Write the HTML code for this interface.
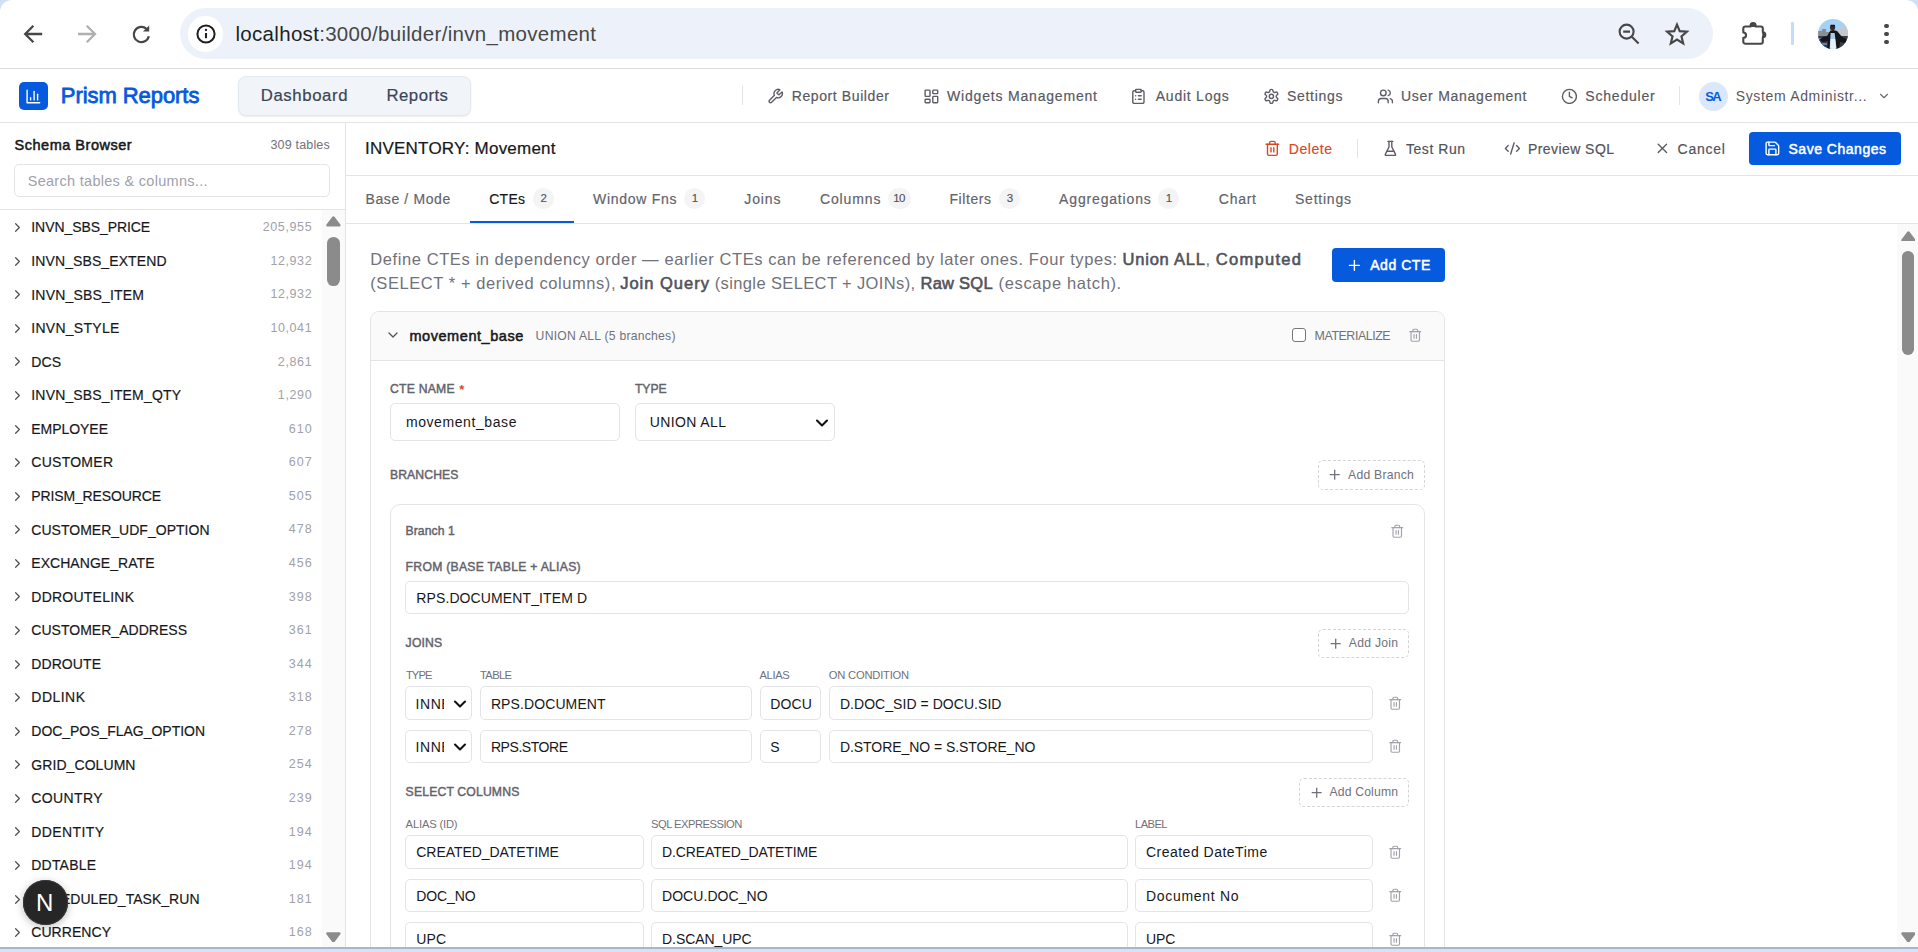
<!DOCTYPE html>
<html lang="en"><head><meta charset="utf-8"><title>Prism Reports - Report Builder</title>
<style>
html,body{margin:0;padding:0}
body{width:1918px;height:952px;overflow:hidden;position:relative;background:#fff;font-family:"Liberation Sans", sans-serif;}
body div,body span,body svg{position:absolute;box-sizing:border-box}
header,nav,aside,main,section,footer{position:absolute;left:0;top:0;width:0;height:0}
body span{white-space:nowrap;display:block}
body span b{position:static}
</style></head><body>
<header>
<div style="left:0px;top:0px;width:12px;height:12px;background:#cfe0f7"></div>
<div style="left:0px;top:0px;width:24px;height:24px;background:#fff;border-top-left-radius:12px"></div>
<div style="left:1906px;top:0px;width:12px;height:12px;background:#cfe0f7"></div>
<div style="left:1894px;top:0px;width:24px;height:24px;background:#fff;border-top-right-radius:12px"></div>
<div style="left:180px;top:8px;width:1533px;height:51px;background:#edf2fa;border-radius:26px"></div>
<div style="left:187.5px;top:16px;width:35.5px;height:35.5px;background:#fff;border-radius:50%"></div>
<svg style="left:195.5px;top:23.7px" width="20" height="20" viewBox="0 0 20 20" fill="none" stroke="#1f1f1f" stroke-width="2"><circle cx="10" cy="10" r="8.6"/><path d="M10 9v5.2" stroke-width="2.1"/><circle cx="10" cy="6" r="1.15" fill="#1f1f1f" stroke="none"/></svg>
<svg style="left:23px;top:24px" width="20" height="20" viewBox="0 0 20 20" fill="none" stroke="#474747" stroke-width="2.3" stroke-linejoin="miter"><path d="M10.4 1.8 2.2 10l8.2 8.2M2.6 10h16.6"/></svg>
<svg style="left:77px;top:24px" width="20" height="20" viewBox="0 0 20 20" fill="none" stroke="#b0b0b0" stroke-width="2.3" stroke-linejoin="miter"><path d="M9.8 1.8 18 10 9.8 18.2M17.6 10H1"/></svg>
<svg style="left:130.5px;top:23.5px" width="21" height="21" viewBox="0 0 21 21" fill="none" stroke="#474747" stroke-width="2.1"><path d="M17.8 12.2A7.6 7.6 0 1 1 15.6 5" stroke-width="2.3"/><path d="M18.2 1.4v6.2h-6.2z" fill="#474747" stroke="none"/></svg>
<span style="left:235.50px;top:20px;font-size:20.5px;line-height:27px;color:#474747;letter-spacing:0.304px;"><b style="font-weight:400;color:#1f1f1f">localhost</b>:3000/builder/invn_movement</span>
<svg style="left:1617px;top:22px" width="24" height="24" viewBox="0 0 24 24" fill="none" stroke="#474747" stroke-width="2.1"><circle cx="9.6" cy="9.6" r="7"/><path d="M14.8 14.8 21.6 21.6M6.2 9.6h6.8"/></svg>
<svg style="left:1664px;top:21px" width="26" height="26" viewBox="0 0 24 24" fill="none" stroke="#474747" stroke-width="2" stroke-linejoin="miter"><path d="M12 3.3l2.5 6.1 6.6.5-5 4.3 1.6 6.4L12 17.1l-5.7 3.5 1.6-6.4-5-4.3 6.6-.5z"/></svg>
<svg style="left:1740px;top:19.5px" width="28" height="28" viewBox="0 0 28 28" fill="none" stroke="#474747" stroke-width="2.1" stroke-linejoin="round"><path d="M5.3 6.5H10.6v-1a2.5 2.5 0 0 1 5 0v1H20.8a2 2 0 0 1 2 2V12.3a2.5 2.5 0 0 1 0 5V21.7a2 2 0 0 1-2 2H5.3a2 2 0 0 1-2-2V17.9a2.7 2.7 0 0 0 0-5.4V8.5a2 2 0 0 1 2-2z"/><path d="M10.6 6.5v-1a2.5 2.5 0 0 1 5 0v1zM22.8 12.3a2.5 2.5 0 0 1 0 5z" fill="#474747" stroke-width="1"/></svg>
<div style="left:1791px;top:21.5px;width:2.5px;height:23.5px;background:#c2dcfb;border-radius:1px"></div>
<div style="left:1817.8px;top:18.8px;width:30.2px;height:30px;border-radius:50%;overflow:hidden;background:#a6d1f6"><svg style="left:0;top:0" width="30.2" height="30" viewBox="0 0 30 30"><path d="M0 12h4v-2h4v3h4v-3h3v9H0z" fill="#8a8d93"/><path d="M19 10h4V7h5v3h2v10H19z" fill="#c6c8cc"/><rect y="17" width="30" height="13" fill="#3a3d47"/><path d="M0 19h8v3H0zM2 24h7v2H2z" fill="#5f7fb5"/><path d="M9 17l3-5 3-1 4 1 5 6 4 2v4l-6-1-1 7H9l1-8-5 1-4-2 4-3z" fill="#15161a"/><path d="M12.5 14h4l2 16h-7z" fill="#a9cbf3"/><path d="M12.5 20h4.5l1 10h-6z" fill="#e9f1fc"/><circle cx="14.5" cy="8.6" r="2.6" fill="#3a2a24"/><rect x="12.2" y="5.8" width="4.8" height="1.8" rx=".8" fill="#14161b"/></svg></div>
<div style="left:1884.4px;top:23.7px;width:4.6px;height:4.6px;background:#474747;border-radius:50%"></div>
<div style="left:1884.4px;top:31.7px;width:4.6px;height:4.6px;background:#474747;border-radius:50%"></div>
<div style="left:1884.4px;top:39.7px;width:4.6px;height:4.6px;background:#474747;border-radius:50%"></div>
<div style="left:0px;top:68px;width:1918px;height:1px;background:#dcdcdc"></div>
</header>
<nav>
<div style="left:0px;top:122px;width:1918px;height:1px;background:#e4e4e7"></div>
<div style="left:19px;top:82px;width:29px;height:28px;background:#055ade;border-radius:5px"></div>
<svg style="left:24.90px;top:88.20px" width="16.8" height="16.8" viewBox="0 0 24 24" fill="none" stroke="#fff" stroke-width="2" stroke-linecap="round" stroke-linejoin="round"><path d="M3 3v18h18"/><path d="M18 17V9"/><path d="M13 17V5"/><path d="M8 17v-3"/></svg>
<span style="left:60.80px;top:81px;font-size:22px;line-height:29px;color:#055ade;-webkit-text-stroke:0.79px;letter-spacing:-0.063px;">Prism Reports</span>
<div style="left:238px;top:76px;width:233px;height:39.5px;background:#f1f5f9;border:1px solid #e2e8f0;border-radius:8px;box-shadow:0 1px 2px rgba(0,0,0,.08)"></div>
<span style="left:260.75px;top:84px;font-size:16.75px;line-height:23px;color:#3b4556;-webkit-text-stroke:0.22px;letter-spacing:0.600px;">Dashboard</span>
<span style="left:386.50px;top:84px;font-size:16.75px;line-height:23px;color:#3b4556;-webkit-text-stroke:0.22px;letter-spacing:0.474px;">Reports</span>
<div style="left:742px;top:86px;width:1px;height:18.5px;background:#e4e4e7"></div>
<svg style="left:766.80px;top:87.60px" width="16.8" height="16.8" viewBox="0 0 24 24" fill="none" stroke="#5d5d66" stroke-width="2" stroke-linecap="round" stroke-linejoin="round"><path d="M14.7 6.3a1 1 0 0 0 0 1.4l1.6 1.6a1 1 0 0 0 1.4 0l3.77-3.77a6 6 0 0 1-7.94 7.94l-6.91 6.91a2.12 2.12 0 0 1-3-3l6.91-6.91a6 6 0 0 1 7.94-7.94l-3.76 3.76z"/></svg>
<span style="left:791.75px;top:86px;font-size:14px;line-height:20px;color:#58585f;-webkit-text-stroke:0.18px;letter-spacing:0.596px;">Report Builder</span>
<svg style="left:922.80px;top:87.60px" width="16.8" height="16.8" viewBox="0 0 24 24" fill="none" stroke="#5d5d66" stroke-width="2" stroke-linecap="round" stroke-linejoin="round"><rect width="7" height="9" x="3" y="3" rx="1"/><rect width="7" height="5" x="14" y="3" rx="1"/><rect width="7" height="9" x="14" y="12" rx="1"/><rect width="7" height="5" x="3" y="16" rx="1"/></svg>
<span style="left:947.00px;top:86px;font-size:14px;line-height:20px;color:#58585f;-webkit-text-stroke:0.18px;letter-spacing:0.812px;">Widgets Management</span>
<svg style="left:1130.30px;top:87.60px" width="16.8" height="16.8" viewBox="0 0 24 24" fill="none" stroke="#5d5d66" stroke-width="2" stroke-linecap="round" stroke-linejoin="round"><rect width="8" height="4" x="8" y="2" rx="1" ry="1"/><path d="M16 4h2a2 2 0 0 1 2 2v14a2 2 0 0 1-2 2H6a2 2 0 0 1-2-2V6a2 2 0 0 1 2-2h2"/><path d="M12 11h4"/><path d="M12 16h4"/><path d="M8 11h.01"/><path d="M8 16h.01"/></svg>
<span style="left:1155.75px;top:86px;font-size:14px;line-height:20px;color:#58585f;-webkit-text-stroke:0.18px;letter-spacing:0.759px;">Audit Logs</span>
<svg style="left:1262.60px;top:87.60px" width="16.8" height="16.8" viewBox="0 0 24 24" fill="none" stroke="#5d5d66" stroke-width="2" stroke-linecap="round" stroke-linejoin="round"><path d="M12.22 2h-.44a2 2 0 0 0-2 2v.18a2 2 0 0 1-1 1.73l-.43.25a2 2 0 0 1-2 0l-.15-.08a2 2 0 0 0-2.73.73l-.22.38a2 2 0 0 0 .73 2.73l.15.1a2 2 0 0 1 1 1.72v.51a2 2 0 0 1-1 1.74l-.15.09a2 2 0 0 0-.73 2.73l.22.38a2 2 0 0 0 2.73.73l.15-.08a2 2 0 0 1 2 0l.43.25a2 2 0 0 1 1 1.73V20a2 2 0 0 0 2 2h.44a2 2 0 0 0 2-2v-.18a2 2 0 0 1 1-1.73l.43-.25a2 2 0 0 1 2 0l.15.08a2 2 0 0 0 2.73-.73l.22-.39a2 2 0 0 0-.73-2.73l-.15-.08a2 2 0 0 1-1-1.74v-.5a2 2 0 0 1 1-1.74l.15-.09a2 2 0 0 0 .73-2.73l-.22-.38a2 2 0 0 0-2.73-.73l-.15.08a2 2 0 0 1-2 0l-.43-.25a2 2 0 0 1-1-1.73V4a2 2 0 0 0-2-2z"/><circle cx="12" cy="12" r="3"/></svg>
<span style="left:1287.00px;top:86px;font-size:14px;line-height:20px;color:#58585f;-webkit-text-stroke:0.18px;letter-spacing:0.701px;">Settings</span>
<svg style="left:1376.60px;top:87.60px" width="16.8" height="16.8" viewBox="0 0 24 24" fill="none" stroke="#5d5d66" stroke-width="2" stroke-linecap="round" stroke-linejoin="round"><path d="M16 21v-2a4 4 0 0 0-4-4H6a4 4 0 0 0-4 4v2"/><circle cx="9" cy="7" r="4"/><path d="M22 21v-2a4 4 0 0 0-3-3.87"/><path d="M16 3.13a4 4 0 0 1 0 7.75"/></svg>
<span style="left:1401.00px;top:86px;font-size:14px;line-height:20px;color:#58585f;-webkit-text-stroke:0.18px;letter-spacing:0.738px;">User Management</span>
<svg style="left:1560.60px;top:87.60px" width="16.8" height="16.8" viewBox="0 0 24 24" fill="none" stroke="#5d5d66" stroke-width="2" stroke-linecap="round" stroke-linejoin="round"><circle cx="12" cy="12" r="10"/><polyline points="12 6 12 12 16 14"/></svg>
<span style="left:1585.30px;top:86px;font-size:14px;line-height:20px;color:#58585f;-webkit-text-stroke:0.18px;letter-spacing:0.794px;">Scheduler</span>
<div style="left:1679px;top:86px;width:1px;height:18.5px;background:#e4e4e7"></div>
<div style="left:1699px;top:81.5px;width:29px;height:29px;background:#dbe7fb;border-radius:50%"></div>
<span style="left:1705.30px;top:87px;font-size:13px;line-height:19px;color:#055ade;font-weight:700;letter-spacing:-1.663px;">SA</span>
<span style="left:1735.70px;top:86px;font-size:14px;line-height:20px;color:#58585f;letter-spacing:0.664px;">System Administr...</span>
<svg style="left:1877.40px;top:89.20px" width="14" height="14" viewBox="0 0 24 24" fill="none" stroke="#6a6a72" stroke-width="2" stroke-linecap="round" stroke-linejoin="round"><path d="m6 9 6 6 6-6"/></svg>
</nav>
<aside>
<div style="left:345px;top:123px;width:1px;height:824px;background:#e4e4e7"></div>
<span style="left:14.60px;top:135px;font-size:14.5px;line-height:20px;color:#18181b;-webkit-text-stroke:0.52px;letter-spacing:0.507px;">Schema Browser</span>
<span style="left:270.50px;top:136px;font-size:12.5px;line-height:18px;color:#71717a;letter-spacing:0.168px;">309 tables</span>
<div style="left:14px;top:164px;width:316px;height:33px;border:1px solid #e4e4e7;border-radius:5px;background:#fff"></div>
<span style="left:27.70px;top:171px;font-size:14.5px;line-height:20px;color:#a1a1aa;letter-spacing:0.293px;">Search tables &amp; columns...</span>
<div style="left:0px;top:209px;width:345px;height:1px;background:#e4e4e7"></div>
<div style="left:322px;top:210px;width:23px;height:737px;background:#fafafa"></div>
<div style="left:327px;top:236.7px;width:12.8px;height:49.2px;background:#8b8b8b;border-radius:6.4px"></div>
<svg style="left:9.55px;top:220.20px" width="15" height="15" viewBox="0 0 24 24" fill="none" stroke="#52525b" stroke-width="2" stroke-linecap="round" stroke-linejoin="round"><path d="m9 18 6-6-6-6"/></svg>
<span style="left:31.30px;top:217px;font-size:14px;line-height:20px;color:#18181b;-webkit-text-stroke:0.18px;letter-spacing:-0.071px;">INVN_SBS_PRICE</span>
<span style="left:262.70px;top:218px;font-size:12.5px;line-height:18px;color:#a1a1aa;letter-spacing:0.619px;">205,955</span>
<svg style="left:9.55px;top:253.77px" width="15" height="15" viewBox="0 0 24 24" fill="none" stroke="#52525b" stroke-width="2" stroke-linecap="round" stroke-linejoin="round"><path d="m9 18 6-6-6-6"/></svg>
<span style="left:31.30px;top:251px;font-size:14px;line-height:20px;color:#18181b;-webkit-text-stroke:0.18px;letter-spacing:0.098px;">INVN_SBS_EXTEND</span>
<span style="left:270.40px;top:252px;font-size:12.5px;line-height:18px;color:#a1a1aa;letter-spacing:0.593px;">12,932</span>
<svg style="left:9.55px;top:287.34px" width="15" height="15" viewBox="0 0 24 24" fill="none" stroke="#52525b" stroke-width="2" stroke-linecap="round" stroke-linejoin="round"><path d="m9 18 6-6-6-6"/></svg>
<span style="left:31.30px;top:285px;font-size:14px;line-height:20px;color:#18181b;-webkit-text-stroke:0.18px;letter-spacing:0.185px;">INVN_SBS_ITEM</span>
<span style="left:270.40px;top:285px;font-size:12.5px;line-height:18px;color:#a1a1aa;letter-spacing:0.593px;">12,932</span>
<svg style="left:9.55px;top:320.91px" width="15" height="15" viewBox="0 0 24 24" fill="none" stroke="#52525b" stroke-width="2" stroke-linecap="round" stroke-linejoin="round"><path d="m9 18 6-6-6-6"/></svg>
<span style="left:31.30px;top:318px;font-size:14px;line-height:20px;color:#18181b;-webkit-text-stroke:0.18px;letter-spacing:0.267px;">INVN_STYLE</span>
<span style="left:270.40px;top:319px;font-size:12.5px;line-height:18px;color:#a1a1aa;letter-spacing:0.593px;">10,041</span>
<svg style="left:9.55px;top:354.48px" width="15" height="15" viewBox="0 0 24 24" fill="none" stroke="#52525b" stroke-width="2" stroke-linecap="round" stroke-linejoin="round"><path d="m9 18 6-6-6-6"/></svg>
<span style="left:31.30px;top:352px;font-size:14px;line-height:20px;color:#18181b;-webkit-text-stroke:0.18px;letter-spacing:0.069px;">DCS</span>
<span style="left:277.80px;top:353px;font-size:12.5px;line-height:18px;color:#a1a1aa;letter-spacing:0.630px;">2,861</span>
<svg style="left:9.55px;top:388.06px" width="15" height="15" viewBox="0 0 24 24" fill="none" stroke="#52525b" stroke-width="2" stroke-linecap="round" stroke-linejoin="round"><path d="m9 18 6-6-6-6"/></svg>
<span style="left:31.30px;top:385px;font-size:14px;line-height:20px;color:#18181b;-webkit-text-stroke:0.18px;letter-spacing:0.166px;">INVN_SBS_ITEM_QTY</span>
<span style="left:277.80px;top:386px;font-size:12.5px;line-height:18px;color:#a1a1aa;letter-spacing:0.630px;">1,290</span>
<svg style="left:9.55px;top:421.63px" width="15" height="15" viewBox="0 0 24 24" fill="none" stroke="#52525b" stroke-width="2" stroke-linecap="round" stroke-linejoin="round"><path d="m9 18 6-6-6-6"/></svg>
<span style="left:31.30px;top:419px;font-size:14px;line-height:20px;color:#18181b;-webkit-text-stroke:0.18px;letter-spacing:-0.047px;">EMPLOYEE</span>
<span style="left:288.80px;top:420px;font-size:12.5px;line-height:18px;color:#a1a1aa;letter-spacing:0.970px;">610</span>
<svg style="left:9.55px;top:455.20px" width="15" height="15" viewBox="0 0 24 24" fill="none" stroke="#52525b" stroke-width="2" stroke-linecap="round" stroke-linejoin="round"><path d="m9 18 6-6-6-6"/></svg>
<span style="left:31.30px;top:452px;font-size:14px;line-height:20px;color:#18181b;-webkit-text-stroke:0.18px;letter-spacing:0.263px;">CUSTOMER</span>
<span style="left:288.80px;top:453px;font-size:12.5px;line-height:18px;color:#a1a1aa;letter-spacing:0.970px;">607</span>
<svg style="left:9.55px;top:488.77px" width="15" height="15" viewBox="0 0 24 24" fill="none" stroke="#52525b" stroke-width="2" stroke-linecap="round" stroke-linejoin="round"><path d="m9 18 6-6-6-6"/></svg>
<span style="left:31.30px;top:486px;font-size:14px;line-height:20px;color:#18181b;-webkit-text-stroke:0.18px;letter-spacing:-0.136px;">PRISM_RESOURCE</span>
<span style="left:288.80px;top:487px;font-size:12.5px;line-height:18px;color:#a1a1aa;letter-spacing:0.970px;">505</span>
<svg style="left:9.55px;top:522.34px" width="15" height="15" viewBox="0 0 24 24" fill="none" stroke="#52525b" stroke-width="2" stroke-linecap="round" stroke-linejoin="round"><path d="m9 18 6-6-6-6"/></svg>
<span style="left:31.30px;top:520px;font-size:14px;line-height:20px;color:#18181b;-webkit-text-stroke:0.18px;letter-spacing:0.018px;">CUSTOMER_UDF_OPTION</span>
<span style="left:288.80px;top:520px;font-size:12.5px;line-height:18px;color:#a1a1aa;letter-spacing:0.970px;">478</span>
<svg style="left:9.55px;top:555.91px" width="15" height="15" viewBox="0 0 24 24" fill="none" stroke="#52525b" stroke-width="2" stroke-linecap="round" stroke-linejoin="round"><path d="m9 18 6-6-6-6"/></svg>
<span style="left:31.30px;top:553px;font-size:14px;line-height:20px;color:#18181b;-webkit-text-stroke:0.18px;letter-spacing:0.044px;">EXCHANGE_RATE</span>
<span style="left:288.80px;top:554px;font-size:12.5px;line-height:18px;color:#a1a1aa;letter-spacing:0.970px;">456</span>
<svg style="left:9.55px;top:589.48px" width="15" height="15" viewBox="0 0 24 24" fill="none" stroke="#52525b" stroke-width="2" stroke-linecap="round" stroke-linejoin="round"><path d="m9 18 6-6-6-6"/></svg>
<span style="left:31.30px;top:587px;font-size:14px;line-height:20px;color:#18181b;-webkit-text-stroke:0.18px;letter-spacing:0.234px;">DDROUTELINK</span>
<span style="left:288.80px;top:588px;font-size:12.5px;line-height:18px;color:#a1a1aa;letter-spacing:0.970px;">398</span>
<svg style="left:9.55px;top:623.05px" width="15" height="15" viewBox="0 0 24 24" fill="none" stroke="#52525b" stroke-width="2" stroke-linecap="round" stroke-linejoin="round"><path d="m9 18 6-6-6-6"/></svg>
<span style="left:31.30px;top:620px;font-size:14px;line-height:20px;color:#18181b;-webkit-text-stroke:0.18px;letter-spacing:0.025px;">CUSTOMER_ADDRESS</span>
<span style="left:288.80px;top:621px;font-size:12.5px;line-height:18px;color:#a1a1aa;letter-spacing:0.970px;">361</span>
<svg style="left:9.55px;top:656.62px" width="15" height="15" viewBox="0 0 24 24" fill="none" stroke="#52525b" stroke-width="2" stroke-linecap="round" stroke-linejoin="round"><path d="m9 18 6-6-6-6"/></svg>
<span style="left:31.30px;top:654px;font-size:14px;line-height:20px;color:#18181b;-webkit-text-stroke:0.18px;letter-spacing:0.078px;">DDROUTE</span>
<span style="left:288.80px;top:655px;font-size:12.5px;line-height:18px;color:#a1a1aa;letter-spacing:0.970px;">344</span>
<svg style="left:9.55px;top:690.19px" width="15" height="15" viewBox="0 0 24 24" fill="none" stroke="#52525b" stroke-width="2" stroke-linecap="round" stroke-linejoin="round"><path d="m9 18 6-6-6-6"/></svg>
<span style="left:31.30px;top:687px;font-size:14px;line-height:20px;color:#18181b;-webkit-text-stroke:0.18px;letter-spacing:0.468px;">DDLINK</span>
<span style="left:288.80px;top:688px;font-size:12.5px;line-height:18px;color:#a1a1aa;letter-spacing:0.970px;">318</span>
<svg style="left:9.55px;top:723.76px" width="15" height="15" viewBox="0 0 24 24" fill="none" stroke="#52525b" stroke-width="2" stroke-linecap="round" stroke-linejoin="round"><path d="m9 18 6-6-6-6"/></svg>
<span style="left:31.30px;top:721px;font-size:14px;line-height:20px;color:#18181b;-webkit-text-stroke:0.18px;letter-spacing:-0.032px;">DOC_POS_FLAG_OPTION</span>
<span style="left:288.80px;top:722px;font-size:12.5px;line-height:18px;color:#a1a1aa;letter-spacing:0.970px;">278</span>
<svg style="left:9.55px;top:757.34px" width="15" height="15" viewBox="0 0 24 24" fill="none" stroke="#52525b" stroke-width="2" stroke-linecap="round" stroke-linejoin="round"><path d="m9 18 6-6-6-6"/></svg>
<span style="left:31.30px;top:755px;font-size:14px;line-height:20px;color:#18181b;-webkit-text-stroke:0.18px;letter-spacing:0.073px;">GRID_COLUMN</span>
<span style="left:288.80px;top:755px;font-size:12.5px;line-height:18px;color:#a1a1aa;letter-spacing:0.970px;">254</span>
<svg style="left:9.55px;top:790.91px" width="15" height="15" viewBox="0 0 24 24" fill="none" stroke="#52525b" stroke-width="2" stroke-linecap="round" stroke-linejoin="round"><path d="m9 18 6-6-6-6"/></svg>
<span style="left:31.30px;top:788px;font-size:14px;line-height:20px;color:#18181b;-webkit-text-stroke:0.18px;letter-spacing:0.372px;">COUNTRY</span>
<span style="left:288.80px;top:789px;font-size:12.5px;line-height:18px;color:#a1a1aa;letter-spacing:0.970px;">239</span>
<svg style="left:9.55px;top:824.48px" width="15" height="15" viewBox="0 0 24 24" fill="none" stroke="#52525b" stroke-width="2" stroke-linecap="round" stroke-linejoin="round"><path d="m9 18 6-6-6-6"/></svg>
<span style="left:31.30px;top:822px;font-size:14px;line-height:20px;color:#18181b;-webkit-text-stroke:0.18px;letter-spacing:0.386px;">DDENTITY</span>
<span style="left:288.80px;top:823px;font-size:12.5px;line-height:18px;color:#a1a1aa;letter-spacing:0.970px;">194</span>
<svg style="left:9.55px;top:858.05px" width="15" height="15" viewBox="0 0 24 24" fill="none" stroke="#52525b" stroke-width="2" stroke-linecap="round" stroke-linejoin="round"><path d="m9 18 6-6-6-6"/></svg>
<span style="left:31.30px;top:855px;font-size:14px;line-height:20px;color:#18181b;-webkit-text-stroke:0.18px;letter-spacing:0.192px;">DDTABLE</span>
<span style="left:288.80px;top:856px;font-size:12.5px;line-height:18px;color:#a1a1aa;letter-spacing:0.970px;">194</span>
<svg style="left:9.55px;top:891.62px" width="15" height="15" viewBox="0 0 24 24" fill="none" stroke="#52525b" stroke-width="2" stroke-linecap="round" stroke-linejoin="round"><path d="m9 18 6-6-6-6"/></svg>
<span style="left:31.30px;top:889px;font-size:14px;line-height:20px;color:#18181b;-webkit-text-stroke:0.18px;letter-spacing:0.025px;">SCHEDULED_TASK_RUN</span>
<span style="left:288.80px;top:890px;font-size:12.5px;line-height:18px;color:#a1a1aa;letter-spacing:0.970px;">181</span>
<svg style="left:9.55px;top:925.19px" width="15" height="15" viewBox="0 0 24 24" fill="none" stroke="#52525b" stroke-width="2" stroke-linecap="round" stroke-linejoin="round"><path d="m9 18 6-6-6-6"/></svg>
<span style="left:31.30px;top:922px;font-size:14px;line-height:20px;color:#18181b;-webkit-text-stroke:0.18px;letter-spacing:0.051px;">CURRENCY</span>
<span style="left:288.80px;top:923px;font-size:12.5px;line-height:18px;color:#a1a1aa;letter-spacing:0.970px;">168</span>
<div style="left:23px;top:880.3px;width:44.5px;height:44.5px;background:#262626;border-radius:50%;box-shadow:0 0 0 1px #3a3a3a inset, 0 2px 8px rgba(0,0,0,.25)"></div>
<span style="left:36.10px;top:887px;font-size:24px;line-height:31px;color:#fff;">N</span>
</aside>
<main>
<section>
<span style="left:365.00px;top:137px;font-size:17px;line-height:23px;color:#18181b;-webkit-text-stroke:0.22px;letter-spacing:0.226px;">INVENTORY: Movement</span>
<div style="left:346px;top:175px;width:1572px;height:1px;background:#e4e4e7"></div>
<svg style="left:1263.80px;top:140.10px" width="16.8" height="16.8" viewBox="0 0 24 24" fill="none" stroke="#d9481f" stroke-width="2" stroke-linecap="round" stroke-linejoin="round"><path d="M3 6h18"/><path d="M19 6v14c0 1-1 2-2 2H7c-1 0-2-1-2-2V6"/><path d="M8 6V4c0-1 1-2 2-2h4c1 0 2 1 2 2v2"/><line x1="10" x2="10" y1="11" y2="17"/><line x1="14" x2="14" y1="11" y2="17"/></svg>
<span style="left:1288.75px;top:139px;font-size:14px;line-height:20px;color:#d9481f;-webkit-text-stroke:0.18px;letter-spacing:0.556px;">Delete</span>
<div style="left:1357px;top:139px;width:1px;height:18.5px;background:#e4e4e7"></div>
<svg style="left:1382.00px;top:140.10px" width="16.8" height="16.8" viewBox="0 0 24 24" fill="none" stroke="#5d5d66" stroke-width="2" stroke-linecap="round" stroke-linejoin="round"><path d="M10 2v7.527a2 2 0 0 1-.211.896L4.72 20.55a1 1 0 0 0 .9 1.45h12.76a1 1 0 0 0 .9-1.45l-5.069-10.127A2 2 0 0 1 14 9.527V2"/><path d="M8.5 2h7"/><path d="M7 16h10"/></svg>
<span style="left:1406.00px;top:139px;font-size:14px;line-height:20px;color:#52525b;-webkit-text-stroke:0.18px;letter-spacing:0.536px;">Test Run</span>
<svg style="left:1503.60px;top:140.10px" width="16.8" height="16.8" viewBox="0 0 24 24" fill="none" stroke="#5d5d66" stroke-width="2" stroke-linecap="round" stroke-linejoin="round"><path d="m18 16 4-4-4-4"/><path d="m6 8-4 4 4 4"/><path d="m14.5 4-5 16"/></svg>
<span style="left:1528.00px;top:139px;font-size:14px;line-height:20px;color:#52525b;-webkit-text-stroke:0.18px;letter-spacing:0.430px;">Preview SQL</span>
<svg style="left:1653.50px;top:140.10px" width="16.8" height="16.8" viewBox="0 0 24 24" fill="none" stroke="#5d5d66" stroke-width="2" stroke-linecap="round" stroke-linejoin="round"><path d="M18 6 6 18"/><path d="m6 6 12 12"/></svg>
<span style="left:1677.50px;top:139px;font-size:14px;line-height:20px;color:#52525b;-webkit-text-stroke:0.18px;letter-spacing:0.781px;">Cancel</span>
<div style="left:1749px;top:132px;width:151.6px;height:32.8px;background:#055ade;border-radius:4px"></div>
<svg style="left:1763.60px;top:140.10px" width="16.8" height="16.8" viewBox="0 0 24 24" fill="none" stroke="#fff" stroke-width="2" stroke-linecap="round" stroke-linejoin="round"><path d="M15.2 3a2 2 0 0 1 1.4.6l3.8 3.8a2 2 0 0 1 .6 1.4V19a2 2 0 0 1-2 2H5a2 2 0 0 1-2-2V5a2 2 0 0 1 2-2z"/><path d="M17 21v-7a1 1 0 0 0-1-1H8a1 1 0 0 0-1 1v7"/><path d="M7 3v4a1 1 0 0 0 1 1h7"/></svg>
<span style="left:1788.50px;top:139px;font-size:14px;line-height:20px;color:#fff;-webkit-text-stroke:0.50px;letter-spacing:0.514px;">Save Changes</span>
<div style="left:346px;top:223px;width:1572px;height:1px;background:#e4e4e7"></div>
<div style="left:470px;top:221px;width:103.5px;height:2.3px;background:#055ade"></div>
<span style="left:365.50px;top:189px;font-size:14px;line-height:20px;color:#63636b;-webkit-text-stroke:0.18px;letter-spacing:0.614px;">Base / Mode</span>
<span style="left:489.25px;top:189px;font-size:14px;line-height:20px;color:#18181b;-webkit-text-stroke:0.18px;letter-spacing:0.250px;">CTEs</span>
<div style="left:533px;top:188.3px;width:20.5px;height:20.5px;background:#f4f4f5;border-radius:10.3px"></div>
<span style="left:540.50px;top:190px;font-size:11.5px;line-height:16px;color:#52525b;-webkit-text-stroke:0.15px;">2</span>
<span style="left:593.00px;top:189px;font-size:14px;line-height:20px;color:#63636b;-webkit-text-stroke:0.18px;letter-spacing:0.719px;">Window Fns</span>
<div style="left:684px;top:188.3px;width:21px;height:20.5px;background:#f4f4f5;border-radius:10.3px"></div>
<span style="left:691.75px;top:190px;font-size:11.5px;line-height:16px;color:#52525b;-webkit-text-stroke:0.15px;">1</span>
<span style="left:744.25px;top:189px;font-size:14px;line-height:20px;color:#63636b;-webkit-text-stroke:0.18px;letter-spacing:0.891px;">Joins</span>
<span style="left:820.00px;top:189px;font-size:14px;line-height:20px;color:#63636b;-webkit-text-stroke:0.18px;letter-spacing:0.858px;">Columns</span>
<div style="left:887.7px;top:188.3px;width:23.299999999999955px;height:20.5px;background:#f4f4f5;border-radius:10.3px"></div>
<span style="left:893.35px;top:190px;font-size:11.5px;line-height:16px;color:#52525b;-webkit-text-stroke:0.15px;letter-spacing:-0.797px;">10</span>
<span style="left:949.40px;top:189px;font-size:14px;line-height:20px;color:#63636b;-webkit-text-stroke:0.18px;letter-spacing:0.596px;">Filters</span>
<div style="left:999px;top:188.3px;width:20.799999999999955px;height:20.5px;background:#f4f4f5;border-radius:10.3px"></div>
<span style="left:1006.65px;top:190px;font-size:11.5px;line-height:16px;color:#52525b;-webkit-text-stroke:0.15px;">3</span>
<span style="left:1059.10px;top:189px;font-size:14px;line-height:20px;color:#63636b;-webkit-text-stroke:0.18px;letter-spacing:0.835px;">Aggregations</span>
<div style="left:1157.7px;top:188.3px;width:21.799999999999955px;height:20.5px;background:#f4f4f5;border-radius:10.3px"></div>
<span style="left:1165.85px;top:190px;font-size:11.5px;line-height:16px;color:#52525b;-webkit-text-stroke:0.15px;">1</span>
<span style="left:1218.80px;top:189px;font-size:14px;line-height:20px;color:#63636b;-webkit-text-stroke:0.18px;letter-spacing:0.741px;">Chart</span>
<span style="left:1295.00px;top:189px;font-size:14px;line-height:20px;color:#63636b;-webkit-text-stroke:0.18px;letter-spacing:0.772px;">Settings</span>
<svg style="left:326.1px;top:216.4px" width="14.8" height="10.8" viewBox="0 0 14.8 10.8"><path d="M7.4 1.5 13.3 9.3H1.5z" fill="#8b8b8b" stroke="#8b8b8b" stroke-width="2.6" stroke-linejoin="round"/></svg>
<svg style="left:326.1px;top:931.5px" width="14.8" height="10.8" viewBox="0 0 14.8 10.8"><path d="M7.4 9.3 13.3 1.5H1.5z" fill="#8b8b8b" stroke="#8b8b8b" stroke-width="2.6" stroke-linejoin="round"/></svg>
<div style="left:1897px;top:224px;width:21px;height:723px;background:#fafafa"></div>
<svg style="left:1900.7px;top:230.7px" width="14.8" height="10.8" viewBox="0 0 14.8 10.8"><path d="M7.4 1.5 13.3 9.3H1.5z" fill="#8b8b8b" stroke="#8b8b8b" stroke-width="2.6" stroke-linejoin="round"/></svg>
<svg style="left:1900.6px;top:931.7px" width="14.8" height="10.8" viewBox="0 0 14.8 10.8"><path d="M7.4 9.3 13.3 1.5H1.5z" fill="#8b8b8b" stroke="#8b8b8b" stroke-width="2.6" stroke-linejoin="round"/></svg>
<div style="left:1902.2px;top:250.8px;width:11.6px;height:104px;background:#8b8b8b;border-radius:5.8px"></div>
</section>
<section>
<span style="left:370.30px;top:248px;font-size:16.5px;line-height:22px;color:#71717a;letter-spacing:0.584px;">Define CTEs in dependency order — earlier CTEs can be referenced by later ones. Four types:</span>
<span style="left:1122.50px;top:248px;font-size:16.5px;line-height:22px;color:#52525b;-webkit-text-stroke:0.59px;letter-spacing:0.793px;">Union ALL</span>
<span style="left:1205.60px;top:248px;font-size:16.5px;line-height:22px;color:#71717a;">,</span>
<span style="left:1215.80px;top:248px;font-size:16.5px;line-height:22px;color:#52525b;-webkit-text-stroke:0.59px;letter-spacing:1.280px;">Computed</span>
<span style="left:370.30px;top:272px;font-size:16.5px;line-height:22px;color:#71717a;letter-spacing:0.564px;">(SELECT * + derived columns),</span>
<span style="left:620.20px;top:272px;font-size:16.5px;line-height:22px;color:#52525b;-webkit-text-stroke:0.59px;letter-spacing:1.000px;">Join Query</span>
<span style="left:714.70px;top:272px;font-size:16.5px;line-height:22px;color:#71717a;letter-spacing:0.378px;">(single SELECT + JOINs),</span>
<span style="left:920.50px;top:272px;font-size:16.5px;line-height:22px;color:#52525b;-webkit-text-stroke:0.59px;letter-spacing:0.248px;">Raw SQL</span>
<span style="left:998.60px;top:272px;font-size:16.5px;line-height:22px;color:#71717a;letter-spacing:0.633px;">(escape hatch).</span>
<div style="left:1332px;top:248px;width:113px;height:34px;background:#055ade;border-radius:4px"></div>
<svg style="left:1346.00px;top:257.00px" width="16.8" height="16.8" viewBox="0 0 24 24" fill="none" stroke="#fff" stroke-width="2" stroke-linecap="round" stroke-linejoin="round"><path d="M5 12h14"/><path d="M12 5v14"/></svg>
<span style="left:1370.25px;top:255px;font-size:14px;line-height:20px;color:#fff;-webkit-text-stroke:0.50px;letter-spacing:0.531px;">Add CTE</span>
<div style="left:370px;top:311px;width:1075px;height:700px;border:1px solid #e4e4e7;border-radius:9px;background:#fff"></div>
<div style="left:371px;top:312px;width:1073px;height:49px;background:#fafafa;border-radius:8px 8px 0 0;border-bottom:1px solid #e4e4e7"></div>
<svg style="left:385.40px;top:327.40px" width="16" height="16" viewBox="0 0 24 24" fill="none" stroke="#52525b" stroke-width="1.9" stroke-linecap="round" stroke-linejoin="round"><path d="m6 9 6 6 6-6"/></svg>
<span style="left:409.40px;top:326px;font-size:14.5px;line-height:20px;color:#18181b;-webkit-text-stroke:0.52px;letter-spacing:0.566px;">movement_base</span>
<span style="left:535.60px;top:327px;font-size:12.2px;line-height:18px;color:#71717a;letter-spacing:0.232px;">UNION ALL (5 branches)</span>
<div style="left:1292px;top:328px;width:14.4px;height:14.4px;border:1.4px solid #767676;border-radius:3px;background:#fff"></div>
<span style="left:1314.60px;top:327px;font-size:12.4px;line-height:18px;color:#71717a;letter-spacing:-0.433px;">MATERIALIZE</span>
<svg style="left:1407.80px;top:327.55px" width="14.5" height="14.5" viewBox="0 0 24 24" fill="none" stroke="#a1a1aa" stroke-width="1.9" stroke-linecap="round" stroke-linejoin="round"><path d="M3 6h18"/><path d="M19 6v14c0 1-1 2-2 2H7c-1 0-2-1-2-2V6"/><path d="M8 6V4c0-1 1-2 2-2h4c1 0 2 1 2 2v2"/><line x1="10" x2="10" y1="11" y2="17"/><line x1="14" x2="14" y1="11" y2="17"/></svg>
<span style="left:390.00px;top:380px;font-size:12.2px;line-height:18px;color:#63636c;-webkit-text-stroke:0.44px;letter-spacing:0.231px;">CTE NAME</span>
<span style="left:459.20px;top:380px;font-size:13px;line-height:19px;color:#d9481f;font-weight:700;">*</span>
<span style="left:635.00px;top:380px;font-size:12.2px;line-height:18px;color:#63636c;-webkit-text-stroke:0.44px;letter-spacing:-0.081px;">TYPE</span>
<div style="left:390px;top:403px;width:230px;height:38px;border:1px solid #e4e4e7;border-radius:5px;background:#fff"></div>
<span style="left:405.90px;top:412px;font-size:14px;line-height:20px;color:#18181b;letter-spacing:0.590px;">movement_base</span>
<div style="left:635px;top:403px;width:200px;height:38px;border:1px solid #e4e4e7;border-radius:5px;background:#fff"></div>
<span style="left:649.75px;top:412px;font-size:14px;line-height:20px;color:#18181b;letter-spacing:0.389px;">UNION ALL</span>
<svg style="left:815.4px;top:417.9px" width="14" height="10" viewBox="0 0 14 10" fill="none" stroke="#111" stroke-width="2.1" stroke-linecap="round" stroke-linejoin="round"><path d="M2 2.6 7 7.4l5-4.8"/></svg>
<span style="left:390.00px;top:466px;font-size:12.2px;line-height:18px;color:#63636c;-webkit-text-stroke:0.44px;letter-spacing:0.095px;">BRANCHES</span>
<div style="left:1318px;top:460px;width:107px;height:30px;border:1px dashed #d4d4d8;border-radius:5px;background:#fff"></div>
<svg style="left:1327.40px;top:467.40px" width="15.4" height="15.4" viewBox="0 0 24 24" fill="none" stroke="#71717a" stroke-width="2" stroke-linecap="round" stroke-linejoin="round"><path d="M5 12h14"/><path d="M12 5v14"/></svg>
<span style="left:1348.10px;top:466px;font-size:12.2px;line-height:18px;color:#71717a;letter-spacing:0.218px;">Add Branch</span>
<div style="left:390px;top:504px;width:1035px;height:500px;border:1px solid #e4e4e7;border-radius:10px;background:#fff"></div>
<span style="left:405.60px;top:522px;font-size:12.2px;line-height:18px;color:#63636c;-webkit-text-stroke:0.44px;letter-spacing:0.046px;">Branch 1</span>
<svg style="left:1389.95px;top:523.75px" width="14.5" height="14.5" viewBox="0 0 24 24" fill="none" stroke="#a1a1aa" stroke-width="1.9" stroke-linecap="round" stroke-linejoin="round"><path d="M3 6h18"/><path d="M19 6v14c0 1-1 2-2 2H7c-1 0-2-1-2-2V6"/><path d="M8 6V4c0-1 1-2 2-2h4c1 0 2 1 2 2v2"/><line x1="10" x2="10" y1="11" y2="17"/><line x1="14" x2="14" y1="11" y2="17"/></svg>
<span style="left:405.60px;top:558px;font-size:12.2px;line-height:18px;color:#63636c;-webkit-text-stroke:0.44px;letter-spacing:0.269px;">FROM (BASE TABLE + ALIAS)</span>
<div style="left:405px;top:581.25px;width:1004px;height:32.5px;border:1px solid #e4e4e7;border-radius:5px;background:#fff"></div>
<span style="left:416.25px;top:588px;font-size:14px;line-height:20px;color:#18181b;letter-spacing:0.114px;">RPS.DOCUMENT_ITEM D</span>
<span style="left:405.60px;top:634px;font-size:12.2px;line-height:18px;color:#63636c;-webkit-text-stroke:0.44px;letter-spacing:0.190px;">JOINS</span>
<div style="left:1318px;top:629px;width:91px;height:29px;border:1px dashed #d4d4d8;border-radius:5px;background:#fff"></div>
<svg style="left:1328.40px;top:635.90px" width="15.4" height="15.4" viewBox="0 0 24 24" fill="none" stroke="#71717a" stroke-width="2" stroke-linecap="round" stroke-linejoin="round"><path d="M5 12h14"/><path d="M12 5v14"/></svg>
<span style="left:1348.75px;top:634px;font-size:12.2px;line-height:18px;color:#71717a;letter-spacing:0.273px;">Add Join</span>
<span style="left:405.90px;top:667px;font-size:11.2px;line-height:16px;color:#71717a;letter-spacing:-0.878px;">TYPE</span>
<span style="left:480.00px;top:667px;font-size:11.2px;line-height:16px;color:#71717a;letter-spacing:-0.631px;">TABLE</span>
<span style="left:759.50px;top:667px;font-size:11.2px;line-height:16px;color:#71717a;letter-spacing:-0.380px;">ALIAS</span>
<span style="left:828.80px;top:667px;font-size:11.2px;line-height:16px;color:#71717a;letter-spacing:-0.207px;">ON CONDITION</span>
<div style="left:405px;top:686.25px;width:67px;height:33.35000000000002px;border:1px solid #e4e4e7;border-radius:5px;background:#fff"></div>
<div style="left:415.6px;top:694px;width:28.6px;height:20px;overflow:hidden"><span style="left:0;top:0;font-size:14px;line-height:20px;color:#18181b;letter-spacing:0.55px">INNER</span></div>
<svg style="left:452.7px;top:698.8249999999999px" width="14" height="10" viewBox="0 0 14 10" fill="none" stroke="#111" stroke-width="2.1" stroke-linecap="round" stroke-linejoin="round"><path d="M2 2.6 7 7.4l5-4.8"/></svg>
<div style="left:480px;top:686.25px;width:272px;height:33.35000000000002px;border:1px solid #e4e4e7;border-radius:5px;background:#fff"></div>
<span style="left:490.90px;top:694px;font-size:14px;line-height:20px;color:#18181b;letter-spacing:0.103px;">RPS.DOCUMENT</span>
<div style="left:759.5px;top:686.25px;width:61.10000000000002px;height:33.35000000000002px;border:1px solid #e4e4e7;border-radius:5px;background:#fff"></div>
<span style="left:770.20px;top:694px;font-size:14px;line-height:20px;color:#18181b;letter-spacing:0.122px;">DOCU</span>
<div style="left:829px;top:686.25px;width:544px;height:33.35000000000002px;border:1px solid #e4e4e7;border-radius:5px;background:#fff"></div>
<span style="left:839.90px;top:694px;font-size:14px;line-height:20px;color:#18181b;letter-spacing:0.050px;">D.DOC_SID = DOCU.SID</span>
<svg style="left:1387.95px;top:695.97px" width="14.5" height="14.5" viewBox="0 0 24 24" fill="none" stroke="#a1a1aa" stroke-width="1.9" stroke-linecap="round" stroke-linejoin="round"><path d="M3 6h18"/><path d="M19 6v14c0 1-1 2-2 2H7c-1 0-2-1-2-2V6"/><path d="M8 6V4c0-1 1-2 2-2h4c1 0 2 1 2 2v2"/><line x1="10" x2="10" y1="11" y2="17"/><line x1="14" x2="14" y1="11" y2="17"/></svg>
<div style="left:405px;top:730px;width:67px;height:32.60000000000002px;border:1px solid #e4e4e7;border-radius:5px;background:#fff"></div>
<div style="left:415.6px;top:737px;width:28.6px;height:20px;overflow:hidden"><span style="left:0;top:0;font-size:14px;line-height:20px;color:#18181b;letter-spacing:0.55px">INNER</span></div>
<svg style="left:452.7px;top:742.1999999999999px" width="14" height="10" viewBox="0 0 14 10" fill="none" stroke="#111" stroke-width="2.1" stroke-linecap="round" stroke-linejoin="round"><path d="M2 2.6 7 7.4l5-4.8"/></svg>
<div style="left:480px;top:730px;width:272px;height:32.60000000000002px;border:1px solid #e4e4e7;border-radius:5px;background:#fff"></div>
<span style="left:490.90px;top:737px;font-size:14px;line-height:20px;color:#18181b;letter-spacing:-0.432px;">RPS.STORE</span>
<div style="left:759.5px;top:730px;width:61.10000000000002px;height:32.60000000000002px;border:1px solid #e4e4e7;border-radius:5px;background:#fff"></div>
<span style="left:770.20px;top:737px;font-size:14px;line-height:20px;color:#18181b;">S</span>
<div style="left:829px;top:730px;width:544px;height:32.60000000000002px;border:1px solid #e4e4e7;border-radius:5px;background:#fff"></div>
<span style="left:839.90px;top:737px;font-size:14px;line-height:20px;color:#18181b;letter-spacing:-0.051px;">D.STORE_NO = S.STORE_NO</span>
<svg style="left:1387.95px;top:739.35px" width="14.5" height="14.5" viewBox="0 0 24 24" fill="none" stroke="#a1a1aa" stroke-width="1.9" stroke-linecap="round" stroke-linejoin="round"><path d="M3 6h18"/><path d="M19 6v14c0 1-1 2-2 2H7c-1 0-2-1-2-2V6"/><path d="M8 6V4c0-1 1-2 2-2h4c1 0 2 1 2 2v2"/><line x1="10" x2="10" y1="11" y2="17"/><line x1="14" x2="14" y1="11" y2="17"/></svg>
<span style="left:405.60px;top:783px;font-size:12.2px;line-height:18px;color:#63636c;-webkit-text-stroke:0.44px;letter-spacing:0.167px;">SELECT COLUMNS</span>
<div style="left:1299px;top:778px;width:110px;height:29px;border:1px dashed #d4d4d8;border-radius:5px;background:#fff"></div>
<svg style="left:1309.40px;top:784.90px" width="15.4" height="15.4" viewBox="0 0 24 24" fill="none" stroke="#71717a" stroke-width="2" stroke-linecap="round" stroke-linejoin="round"><path d="M5 12h14"/><path d="M12 5v14"/></svg>
<span style="left:1329.40px;top:783px;font-size:12.2px;line-height:18px;color:#71717a;letter-spacing:0.180px;">Add Column</span>
<span style="left:405.60px;top:816px;font-size:11.2px;line-height:16px;color:#71717a;letter-spacing:-0.163px;">ALIAS (ID)</span>
<span style="left:651.00px;top:816px;font-size:11.2px;line-height:16px;color:#71717a;letter-spacing:-0.502px;">SQL EXPRESSION</span>
<span style="left:1135.00px;top:816px;font-size:11.2px;line-height:16px;color:#71717a;letter-spacing:-0.586px;">LABEL</span>
<div style="left:405px;top:835.25px;width:238.60000000000002px;height:33.5px;border:1px solid #e4e4e7;border-radius:5px;background:#fff"></div>
<span style="left:416.25px;top:842px;font-size:14px;line-height:20px;color:#18181b;letter-spacing:-0.046px;">CREATED_DATETIME</span>
<div style="left:651px;top:835.25px;width:476.5px;height:33.5px;border:1px solid #e4e4e7;border-radius:5px;background:#fff"></div>
<span style="left:662.00px;top:842px;font-size:14px;line-height:20px;color:#18181b;letter-spacing:-0.117px;">D.CREATED_DATETIME</span>
<div style="left:1135px;top:835.25px;width:238px;height:33.5px;border:1px solid #e4e4e7;border-radius:5px;background:#fff"></div>
<span style="left:1145.90px;top:842px;font-size:14px;line-height:20px;color:#18181b;letter-spacing:0.496px;">Created DateTime</span>
<svg style="left:1387.95px;top:844.75px" width="14.5" height="14.5" viewBox="0 0 24 24" fill="none" stroke="#a1a1aa" stroke-width="1.9" stroke-linecap="round" stroke-linejoin="round"><path d="M3 6h18"/><path d="M19 6v14c0 1-1 2-2 2H7c-1 0-2-1-2-2V6"/><path d="M8 6V4c0-1 1-2 2-2h4c1 0 2 1 2 2v2"/><line x1="10" x2="10" y1="11" y2="17"/><line x1="14" x2="14" y1="11" y2="17"/></svg>
<div style="left:405px;top:879.4px;width:238.60000000000002px;height:32.39999999999998px;border:1px solid #e4e4e7;border-radius:5px;background:#fff"></div>
<span style="left:416.25px;top:886px;font-size:14px;line-height:20px;color:#18181b;letter-spacing:-0.081px;">DOC_NO</span>
<div style="left:651px;top:879.4px;width:476.5px;height:32.39999999999998px;border:1px solid #e4e4e7;border-radius:5px;background:#fff"></div>
<span style="left:662.00px;top:886px;font-size:14px;line-height:20px;color:#18181b;letter-spacing:0.058px;">DOCU.DOC_NO</span>
<div style="left:1135px;top:879.4px;width:238px;height:32.39999999999998px;border:1px solid #e4e4e7;border-radius:5px;background:#fff"></div>
<span style="left:1145.90px;top:886px;font-size:14px;line-height:20px;color:#18181b;letter-spacing:0.701px;">Document No</span>
<svg style="left:1387.95px;top:888.35px" width="14.5" height="14.5" viewBox="0 0 24 24" fill="none" stroke="#a1a1aa" stroke-width="1.9" stroke-linecap="round" stroke-linejoin="round"><path d="M3 6h18"/><path d="M19 6v14c0 1-1 2-2 2H7c-1 0-2-1-2-2V6"/><path d="M8 6V4c0-1 1-2 2-2h4c1 0 2 1 2 2v2"/><line x1="10" x2="10" y1="11" y2="17"/><line x1="14" x2="14" y1="11" y2="17"/></svg>
<div style="left:405px;top:922.4px;width:238.60000000000002px;height:33.60000000000002px;border:1px solid #e4e4e7;border-radius:5px;background:#fff"></div>
<span style="left:416.25px;top:929px;font-size:14px;line-height:20px;color:#18181b;letter-spacing:0.119px;">UPC</span>
<div style="left:651px;top:922.4px;width:476.5px;height:33.60000000000002px;border:1px solid #e4e4e7;border-radius:5px;background:#fff"></div>
<span style="left:662.00px;top:929px;font-size:14px;line-height:20px;color:#18181b;letter-spacing:-0.061px;">D.SCAN_UPC</span>
<div style="left:1135px;top:922.4px;width:238px;height:33.60000000000002px;border:1px solid #e4e4e7;border-radius:5px;background:#fff"></div>
<span style="left:1145.90px;top:929px;font-size:14px;line-height:20px;color:#18181b;letter-spacing:-0.081px;">UPC</span>
<svg style="left:1387.95px;top:931.95px" width="14.5" height="14.5" viewBox="0 0 24 24" fill="none" stroke="#a1a1aa" stroke-width="1.9" stroke-linecap="round" stroke-linejoin="round"><path d="M3 6h18"/><path d="M19 6v14c0 1-1 2-2 2H7c-1 0-2-1-2-2V6"/><path d="M8 6V4c0-1 1-2 2-2h4c1 0 2 1 2 2v2"/><line x1="10" x2="10" y1="11" y2="17"/><line x1="14" x2="14" y1="11" y2="17"/></svg>
</section>
</main>
<footer>
<div style="left:0px;top:947px;width:1918px;height:2px;background:#a9b5c9"></div>
<div style="left:0px;top:949px;width:1918px;height:3px;background:#d3e3f8"></div>
</footer>
</body></html>
